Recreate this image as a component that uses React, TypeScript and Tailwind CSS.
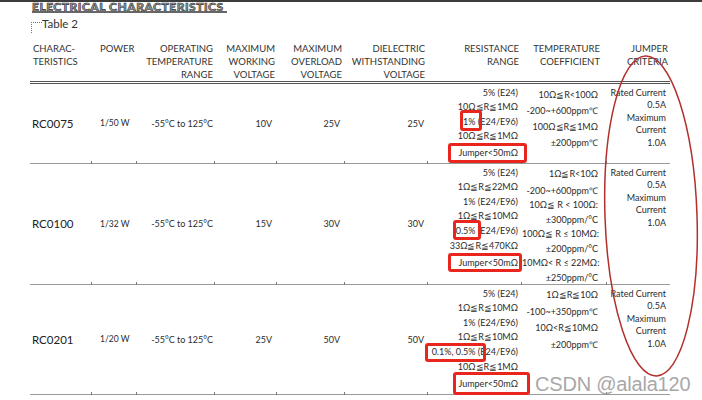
import React from "react";

type Box = { l: number; r: number; t: number; b: number };

function Mark({ children, box }: { children: React.ReactNode; box: Box }) {
  return (
    <span className="relative inline-block">
      {children}
      <span
        className="absolute border-[3px] border-[#e8261d] rounded-[3px]"
        style={{ left: -box.l, right: -box.r, top: -box.t, bottom: -box.b }}
      />
    </span>
  );
}

function Sep() {
  const ws = ["w-[62px]", "w-[45px]", "w-[78px]", "w-[62px]", "w-[68px]", "w-[83px]", "w-[94px]", "w-[85px]", "w-[63px]"];
  return (
    <div className="flex h-px">
      {ws.map((w, i) => (
        <div key={i} className={`${w} h-px bg-[#9a9a9a] flex justify-end`}>
          {i < 8 && <div className="w-px h-[3px] -mt-[2px] bg-[#7a7a7a]" />}
        </div>
      ))}
    </div>
  );
}

function Jumper() {
  return (
    <div className="pt-[2.75px] leading-[12.5px]">
      <div>Rated Current</div>
      <div>0.5A</div>
      <div>Maximum</div>
      <div>Current</div>
      <div>1.0A</div>
    </div>
  );
}

function Basic({ name, power, wv, ov, dv }: { name: string; power: string; wv: string; ov: string; dv: string }) {
  return (
    <>
      <div className="w-[62px] pl-[2px] flex items-center text-[11.5px] text-[#222]">{name}</div>
      <div className="w-[45px] pl-[8px] flex items-center text-[8.5px]">{power}</div>
      <div className="w-[78px] pr-[2px] flex items-center justify-end text-[9px]">-55°C to 125°C</div>
      <div className="w-[62px] pr-[5px] flex items-center justify-end text-[9px]">{wv}</div>
      <div className="w-[68px] pr-[5px] flex items-center justify-end text-[9px]">{ov}</div>
      <div className="w-[83px] pr-[4px] flex items-center justify-end text-[9px]">{dv}</div>
    </>
  );
}

export default function App() {
  return (
    <div className="relative w-[702px] h-[400px] overflow-hidden bg-white text-[#2b2b2b] font-['Lato',sans-serif]">
      <div className="h-[2px] bg-[#3c3c3c]" />
      <div className="pl-[32px] h-[9px] overflow-hidden flex items-end">
        <span className="text-[12px] leading-[12px] font-black tracking-[0.5px] text-[#9a9a9a] [-webkit-text-stroke:0.6px_#2a2a2a] translate-y-[2px] whitespace-nowrap">
          ELECTRICAL CHARACTERISTICS
        </span>
      </div>
      <div className="ml-[32px] w-[195px] h-[2px] bg-[#666]" />

      <div className="flex items-start pl-[31px] mt-[4px]">
        <div className="w-[11px] h-[11px] mt-[5px] border-t border-l border-dotted border-[#777]" />
        <div className="text-[11.5px] leading-[14px] text-[#333]">Table 2</div>
      </div>

      <div className="ml-[30px] w-[640px] mt-[9px]">
        <div className="flex h-[39px] text-[9.5px] leading-[13px] text-[#333] whitespace-nowrap">
          <div className="w-[62px] pl-[3px]">CHARAC-<br />TERISTICS</div>
          <div className="w-[45px] pl-[8px]">POWER</div>
          <div className="w-[78px] pr-[2px] text-right">OPERATING<br />TEMPERATURE<br />RANGE</div>
          <div className="w-[62px] pr-[2px] text-right">MAXIMUM<br />WORKING<br />VOLTAGE</div>
          <div className="w-[68px] pr-[3px] text-right">MAXIMUM<br />OVERLOAD<br />VOLTAGE</div>
          <div className="w-[83px] pr-[3px] text-right">DIELECTRIC<br />WITHSTANDING<br />VOLTAGE</div>
          <div className="w-[94px] pr-[3px] text-right">RESISTANCE<br />RANGE</div>
          <div className="w-[85px] pr-[7px] text-right">TEMPERATURE<br />COEFFICIENT</div>
          <div className="w-[63px] pr-[2px] text-right">JUMPER<br />CRITERIA</div>
        </div>
        <div className="h-[3px] border-t border-b border-[#555]" />

        {/* Row 1 */}
        <div className="flex h-[79px] text-[9px] whitespace-nowrap">
          <Basic name="RC0075" power="1/50 W" wv="10V" ov="25V" dv="25V" />
          <div className="w-[94px] pr-[4px] text-right pt-[1.7px] leading-[14.6px]">
            <div>5% (E24)</div>
            <div>10Ω≦R≦1MΩ</div>
            <div><Mark box={{ l: 3, r: 6, t: 5, b: 2 }}>1%</Mark> (E24/E96)</div>
            <div>10Ω≦R≦1MΩ</div>
            <div className="mt-[1.6px]"><Mark box={{ l: 10, r: 9, t: 3, b: 3 }}>Jumper&lt;50mΩ</Mark></div>
          </div>
          <div className="w-[85px] pr-[9px] text-right pt-[3px] leading-[16px]">
            <div>10Ω≦R&lt;100Ω</div>
            <div>-200~+600ppm℃</div>
            <div>100Ω≦R≦1MΩ</div>
            <div>±200ppm℃</div>
          </div>
          <div className="w-[63px] pr-[4px] text-right">
            <Jumper />
          </div>
        </div>
        <Sep />

        {/* Row 2 */}
        <div className="flex h-[120px] text-[9px] whitespace-nowrap">
          <Basic name="RC0100" power="1/32 W" wv="15V" ov="30V" dv="30V" />
          <div className="w-[94px] pr-[4px] text-right pt-[1.7px] leading-[14.6px]">
            <div>5% (E24)</div>
            <div>1Ω≦R≦22MΩ</div>
            <div>1% (E24/E96)</div>
            <div>1Ω≦R≦10MΩ</div>
            <div><Mark box={{ l: 3, r: 5, t: 4, b: 1 }}>0.5%</Mark> (E24/E96)</div>
            <div>33Ω≦R≦470KΩ</div>
            <div className="mt-[2.4px]"><Mark box={{ l: 10, r: 4, t: 3, b: 2 }}>Jumper&lt;50mΩ</Mark></div>
          </div>
          <div className="w-[85px] pr-[9px] text-right pt-[3px] leading-[14.5px]">
            <div>1Ω≦R&lt;10Ω</div>
            <div className="mt-[2px]">-200~+600ppm℃</div>
            <div>10Ω≦ R &lt; 100Ω:</div>
            <div>±300ppm/°C</div>
            <div>100Ω≦ R ≤ 10MΩ:</div>
            <div>±200ppm/°C</div>
            <div>10MΩ&lt; R ≤ 22MΩ:</div>
            <div>±250ppm/°C</div>
          </div>
          <div className="w-[63px] pr-[4px] text-right">
            <Jumper />
          </div>
        </div>
        <Sep />

        {/* Row 3 */}
        <div className="flex h-[109px] text-[9px] whitespace-nowrap">
          <Basic name="RC0201" power="1/20 W" wv="25V" ov="50V" dv="50V" />
          <div className="w-[94px] pr-[4px] text-right pt-[1.7px] leading-[14.6px]">
            <div>5% (E24)</div>
            <div>1Ω≦R≦10MΩ</div>
            <div>1% (E24/E96)</div>
            <div>1Ω≦R≦10MΩ</div>
            <div><Mark box={{ l: 7, r: 10, t: 2, b: 2 }}>0.1%, 0.5%</Mark> (E24/E96)</div>
            <div>10Ω≦R≦1MΩ</div>
            <div className="mt-[2.4px]"><Mark box={{ l: 5, r: 12, t: 5, b: 4 }}>Jumper&lt;50mΩ</Mark></div>
          </div>
          <div className="w-[85px] pr-[9px] text-right pt-[2px] leading-[16.5px]">
            <div>1Ω≦R≦10Ω</div>
            <div>-100~+350ppm℃</div>
            <div>10Ω&lt;R≦10MΩ</div>
            <div>±200ppm℃</div>
          </div>
          <div className="w-[63px] pr-[4px] text-right">
            <Jumper />
          </div>
        </div>
        <Sep />
      </div>

      <svg className="absolute left-0 top-0 pointer-events-none" width="702" height="400" viewBox="0 0 702 400">
        <ellipse cx="651" cy="216" rx="46" ry="160" transform="rotate(-2 651 216)" fill="none" stroke="#b2302c" strokeWidth="1.5" />
      </svg>

      <div className="absolute left-[535px] top-[372px] text-[20px] leading-[24px] font-['Liberation_Sans',sans-serif] text-[#a8a8a8] whitespace-nowrap tracking-[-0.2px]">
        CSDN @alala120
      </div>
    </div>
  );
}
